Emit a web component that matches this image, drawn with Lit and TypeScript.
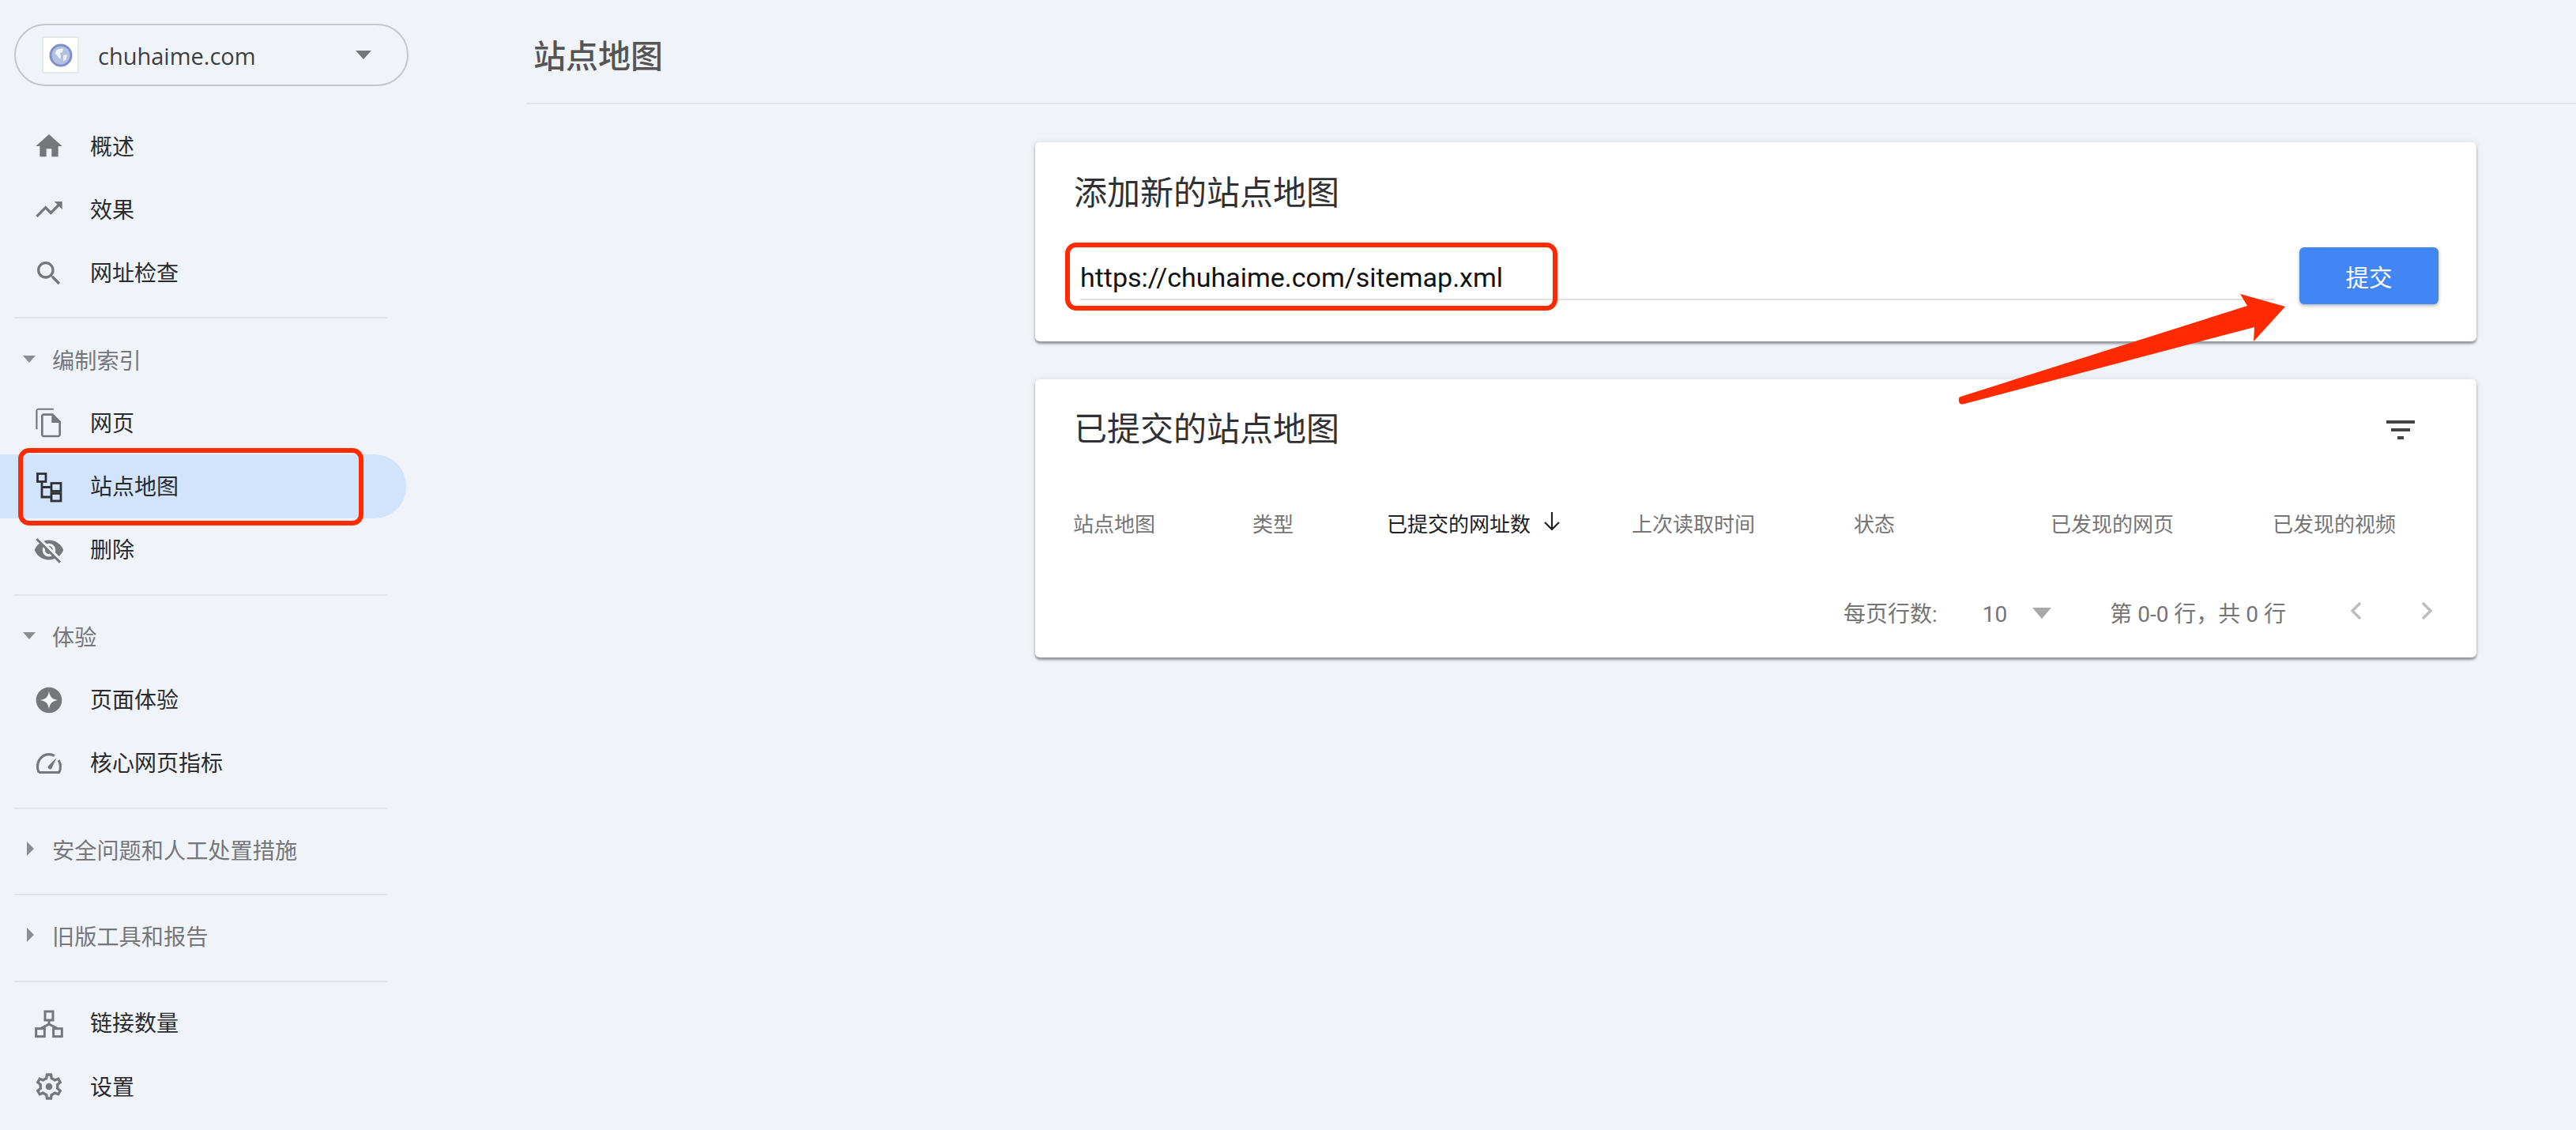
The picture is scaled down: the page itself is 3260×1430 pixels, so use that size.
import { LitElement, html, css, svg } from "lit";
import { customElement } from "lit/decorators.js";

const P = (d: string) => svg`<path d=${d}></path>`;
const icons: Record<string, unknown> = {
  home: P("M10 20v-6h4v6h5v-8h3L12 3 2 12h3v8z"),
  trend: P("M16 6l2.29 2.29-4.88 4.88-4-4L2 16.59 3.41 18l6-6 4 4 6.3-6.29L22 12V6z"),
  search: P("M15.5 14h-.79l-.28-.27C15.41 12.59 16 11.11 16 9.5 16 5.91 13.09 3 9.5 3S3 5.91 3 9.5 5.91 16 9.5 16c1.61 0 3.09-.59 4.23-1.57l.27.28v.79l5 4.99L20.49 19l-4.99-5zm-6 0C7.01 14 5 11.99 5 9.5S7.01 5 9.5 5 14 7.01 14 9.5 11.99 14 9.5 14z"),
  pages: svg`<path d="M15.5 1H4c-1.1 0-2 .9-2 2v14h1.3V2.3h12.2V1z"></path><path d="M15 5H8c-1.1 0-1.99.9-1.99 2L6 21c0 1.1.89 2 1.99 2H19c1.1 0 2-.9 2-2V11l-6-6zM7.6 21.4V6.6h6.4v5.4h5.4v9.4H7.6z"></path><path d="M14.5 6l6 6h-6z"></path>`,
  hide: P("M12 7c2.76 0 5 2.24 5 5 0 .65-.13 1.26-.36 1.83l2.92 2.92c1.51-1.26 2.7-2.89 3.43-4.75-1.73-4.39-6-7.5-11-7.5-1.4 0-2.74.25-3.98.7l2.16 2.16C10.74 7.13 11.35 7 12 7zM2 4.27l2.28 2.28.46.46C3.08 8.3 1.78 10.02 1 12c1.73 4.39 6 7.5 11 7.5 1.55 0 3.03-.3 4.38-.84l.42.42L19.73 22 21 20.73 3.27 3 2 4.27zM7.53 9.8l1.55 1.55c-.05.21-.08.43-.08.65 0 1.66 1.34 3 3 3 .22 0 .44-.03.65-.08l1.55 1.55c-.67.33-1.41.53-2.2.53-2.76 0-5-2.24-5-5 0-.79.2-1.53.53-2.2zm4.31-.78l3.15 3.15.02-.16c0-1.66-1.34-3-3-3l-.17.01z"),
  star: svg`<circle cx="12" cy="12" r="9.8"></circle><path style="fill:#f7f9fc" d="M12 5.2C12.7 9.6 14.4 11.3 18.8 12 14.4 12.7 12.7 14.4 12 18.8 11.3 14.4 9.6 12.7 5.2 12 9.6 11.3 11.3 9.6 12 5.2z"></path>`,
  gauge: svg`<path fill="none" stroke="#75777b" stroke-width="1.9" stroke-linejoin="round" d="M4.3 18.9C3.6 17.6 3.3 16.3 3.3 14.6 3.3 9.2 7.2 5.2 12 5.2c1.6 0 3 .4 4.2 1.1M19.3 9.6c.9 1.5 1.4 3.2 1.4 5 0 1.7-.3 3-1 4.3H4.3"></path><path d="M17.8 7.6l-3.6 8c-.6 1-1.6 1.1-2.4.6-.8-.6-.9-1.7-.2-2.4z"></path>`,
  links: svg`<g fill="none" stroke="#75777b" stroke-width="1.8"><rect x="9" y="3" width="6" height="6.6"></rect><rect x="2.2" y="16" width="6.4" height="6"></rect><rect x="15.4" y="16" width="6.4" height="6"></rect><path d="M12 9.6V12.6L5.6 16M12 12.6L18.4 16"></path></g>`,
  gear: svg`<path d="M19.43 12.98c.04-.32.07-.64.07-.98 0-.34-.03-.66-.07-.98l2.11-1.65c.19-.15.24-.42.12-.64l-2-3.46c-.09-.16-.26-.25-.44-.25-.06 0-.12.01-.17.03l-2.49 1c-.52-.4-1.08-.73-1.69-.98l-.38-2.65C14.46 2.18 14.25 2 14 2h-4c-.25 0-.46.18-.49.42l-.38 2.65c-.61.25-1.17.59-1.69.98l-2.49-1c-.06-.02-.12-.03-.18-.03-.17 0-.34.09-.43.25l-2 3.46c-.13.22-.07.49.12.64l2.11 1.65c-.04.32-.07.65-.07.98 0 .33.03.66.07.98l-2.11 1.65c-.19.15-.24.42-.12.64l2 3.46c.09.16.26.25.44.25.06 0 .12-.01.17-.03l2.49-1c.52.4 1.08.73 1.69.98l.38 2.65c.03.24.24.42.49.42h4c.25 0 .46-.18.49-.42l.38-2.65c.61-.25 1.17-.59 1.69-.98l2.49 1c.06.02.12.03.18.03.17 0 .34-.09.43-.25l2-3.46c.12-.22.07-.49-.12-.64l-2.11-1.65zm-1.98-1.71c.04.31.05.52.05.73 0 .21-.02.43-.05.73l-.14 1.13.89.7 1.08.84-.7 1.21-1.27-.51-1.04-.42-.9.68c-.43.32-.84.56-1.25.73l-1.06.43-.16 1.13-.2 1.35h-1.4l-.19-1.35-.16-1.13-1.06-.43c-.43-.18-.83-.41-1.23-.71l-.91-.7-1.06.43-1.27.51-.7-1.21 1.08-.84.89-.7-.14-1.13c-.03-.31-.05-.54-.05-.74s.02-.43.05-.73l.14-1.13-.89-.7-1.08-.84.7-1.21 1.27.51 1.04.42.9-.68c.43-.32.84-.56 1.25-.73l1.06-.43.16-1.13.2-1.35h1.39l.19 1.35.16 1.13 1.06.43c.43.18.83.41 1.23.71l.91.7 1.06-.43 1.27-.51.7 1.21-1.07.85-.89.7.14 1.13z"></path><circle cx="12" cy="12" r="2.6"></circle>`,
};
const sitemapIcon = svg`<g fill="none" stroke="#2f3033" stroke-width="2.8"><rect x="5.5" y="3.5" width="10.5" height="10"></rect><rect x="23" y="15.5" width="12" height="10"></rect><rect x="23" y="28.5" width="12" height="9.5"></rect><path d="M11 13.5V33H23M11 20.5H23"></path></g>`;

const groups = [
  { items: [["home", "概述"], ["trend", "效果"], ["search", "网址检查"]] },
  { title: "编制索引", open: true, items: [["pages", "网页"], ["sitemap", "站点地图"], ["hide", "删除"]] },
  { title: "体验", open: true, items: [["star", "页面体验"], ["gauge", "核心网页指标"]] },
  { title: "安全问题和人工处置措施", items: [] },
  { title: "旧版工具和报告", items: [] },
  { items: [["links", "链接数量"], ["gear", "设置"]] },
];

const columns = ["站点地图", "类型", "已提交的网址数", "上次读取时间", "状态", "已发现的网页", "已发现的视频"];

@customElement("app-root")
export class AppRoot extends LitElement {
  static styles = css`
    :host {
      display: flex; position: relative; width: 3260px; height: 1430px; overflow: hidden;
      background: #f0f4f9; color: #212121;
      font-family: Roboto, "Noto Sans CJK SC", sans-serif;
    }
    .side { width: 666px; flex: none; padding-top: 30px; box-sizing: border-box; }
    .prop {
      width: 499px; height: 79px; margin-left: 18px; box-sizing: border-box;
      border: 2px solid #c4c6c9; border-radius: 40px; display: flex; align-items: center; padding-left: 33px;
    }
    .fav {
      width: 47px; height: 47px; box-sizing: border-box; background: #fff; border: 2px solid #e6e8ea;
      border-radius: 3px; display: flex; align-items: center; justify-content: center; margin-right: 24px;
    }
    .fav svg { width: 32px; height: 32px; filter: blur(0.6px); }
    .prop-name { font: 29px "Open Sans", sans-serif; color: #3c4043; flex: 1; padding-top: 2px; }
    .caret {
      width: 0; height: 0; border-left: 10px solid transparent; border-right: 10px solid transparent;
      border-top: 11px solid #75777b; margin-right: 45px;
    }
    .nav { margin-top: 36px; }
    .group { padding: 11px 0 16px; }
    .group:first-child { padding: 0 0 15px; }
    .group:nth-child(3), .group:last-child { padding-top: 12px; }
    .divider { height: 2px; width: 472px; margin-left: 18px; background: #e3e4e7; }
    .row {
      height: 80.3px; display: flex; align-items: center; padding-left: 42px; font-size: 28px;
      color: #2a2b2d; box-sizing: border-box; width: 514px;
    }
    .row span { padding-bottom: 3px; }
    .row.active { background: #d2e3fc; border-radius: 0 40px 40px 0; }
    .row svg { width: 40px; height: 40px; fill: #75777b; margin-right: 32px; flex: none; }
    .sec { height: 80.3px; display: flex; align-items: center; font-size: 28.2px; color: #75777b; padding-bottom: 2px; box-sizing: border-box; }
    .tri { width: 66px; flex: none; display: flex; }
    .tri.open i {
      margin-left: 29px; border-left: 8.5px solid transparent; border-right: 8.5px solid transparent; border-top: 9px solid #8b8d90;
    }
    .tri.closed i {
      margin-left: 34px; border-top: 9px solid transparent; border-bottom: 9px solid transparent; border-left: 9px solid #8b8d90;
    }
    .main { flex: 1; }
    .head {
      height: 132px; box-sizing: border-box; border-bottom: 2px solid #e0e2e5; display: flex; align-items: center;
      padding: 5px 0 0 9px; font-size: 41px; font-weight: 500; color: #555; margin-bottom: 48px;
    }
    .card {
      width: 1824px; margin-left: 644px; background: #fff; border-radius: 6px; box-sizing: border-box;
      box-shadow: 0 3px 3px rgba(60, 64, 67, 0.5), 0 0 8px rgba(60, 64, 67, 0.12);
    }
    .c1 { height: 252px; padding: 40px 48px 0 49px; }
    .c2 { height: 352px; margin-top: 48px; padding: 39px 0 0 49px; }
    .title { font-size: 42px; line-height: 50px; color: #303134; }
    .add { display: flex; margin-top: 43px; padding-left: 8px; gap: 32px; }
    .field {
      flex: 1; height: 50px; margin-top: 15px; border-bottom: 2px solid #e0e0e0; font-size: 34px; line-height: 47px; color: #111;
    }
    .btn {
      width: 176px; height: 72px; background: #4285f4; color: #fff; font-size: 29.5px; border-radius: 6px;
      display: flex; align-items: center; justify-content: center;
      box-shadow: 0 2px 4px rgba(60, 64, 67, 0.4);
    }
    .t2 { display: flex; justify-content: space-between; align-items: center; padding-right: 78px; }
    .filter { width: 36px; height: 24px; display: flex; flex-direction: column; align-items: center; justify-content: space-between; }
    .filter i { display: block; height: 4px; background: #444; }
    .filter i:nth-child(1) { width: 36px; }
    .filter i:nth-child(2) { width: 24px; }
    .filter i:nth-child(3) { width: 8px; }
    .cols {
      display: grid; grid-template-columns: 227px 170px 310px 281px 249px 281px 1fr;
      margin: 75px 0 0 -1px; font-size: 26px; line-height: 40px; color: #757575;
    }
    .sorted { color: #202124; display: flex; align-items: center; }
    .sorted svg { width: 24px; height: 26px; margin-left: 15px; fill: none; stroke: #202124; stroke-width: 2.2; margin-top: -10px; }
    .pager {
      display: flex; justify-content: flex-end; align-items: center; margin-top: 74px; padding-right: 54px;
      font-size: 28px; line-height: 40px; color: #757575;
    }
    .num { margin-left: 57px; }
    .drop { width: 0; height: 0; margin: -4px 0 0 32px; border-left: 12px solid transparent; border-right: 12px solid transparent; border-top: 14px solid #a8a8a8; }
    .range { margin-left: 74px; }
    .chev { width: 17px; height: 24px; fill: none; stroke: #bdbdbd; stroke-width: 3.4; margin-top: -10px; }
    .chev.first { margin-left: 80px; }
    .chev.next { margin-left: 73px; }
    .mark { position: absolute; border: 6px solid #ff2a00; border-radius: 14px; box-sizing: border-box; pointer-events: none; }
    .m1 { left: 23px; top: 567px; width: 437px; height: 98px; }
    .m2 { left: 1348px; top: 307px; width: 623px; height: 86px; }
    .arrow { position: absolute; left: 0; top: 0; width: 3260px; height: 1430px; pointer-events: none; }
  `;

  renderRow(icon: string, label: string) {
    const active = icon === "sitemap";
    return html`<div class="row ${active ? "active" : ""}">
      <svg viewBox=${active ? "0 0 40 40" : "0 0 24 24"}>${active ? sitemapIcon : icons[icon]}</svg>
      <span>${label}</span>
    </div>`;
  }

  render() {
    return html`
      <aside class="side">
        <div class="prop">
          <div class="fav">
            <svg viewBox="0 0 32 32">
              <circle cx="16" cy="16" r="13" fill="#b4c0e2" stroke="#7f8fcb" stroke-width="3"></circle>
              <path d="M10 10c3-2 6-3 9-2l-1 4-3 1 1 5-1 3-3-4-3-3z" fill="#f4f6fc"></path>
              <path d="M19 16l5-1-1 6-4 3z" fill="#e6ebf7"></path>
            </svg>
          </div>
          <span class="prop-name">chuhaime.com</span>
          <i class="caret"></i>
        </div>
        <nav class="nav">
          ${groups.map(
            (g, i) => html`
              ${i > 0 ? html`<div class="divider"></div>` : ""}
              <div class="group">
                ${g.title
                  ? html`<div class="sec"><span class="tri ${g.open ? "open" : "closed"}"><i></i></span>${g.title}</div>`
                  : ""}
                ${g.items.map(([ic, label]) => this.renderRow(ic, label))}
              </div>
            `
          )}
        </nav>
      </aside>
      <main class="main">
        <header class="head">站点地图</header>
        <section class="card c1">
          <div class="title">添加新的站点地图</div>
          <div class="add">
            <div class="field">https://chuhaime.com/sitemap.xml</div>
            <div class="btn">提交</div>
          </div>
        </section>
        <section class="card c2">
          <div class="t2">
            <div class="title">已提交的站点地图</div>
            <div class="filter"><i></i><i></i><i></i></div>
          </div>
          <div class="cols">
            ${columns.map((c, i) =>
              i === 2
                ? html`<div class="sorted">${c}<svg viewBox="0 0 24 26"><path d="M12 2V24M3 15L12 24 21 15"></path></svg></div>`
                : html`<div>${c}</div>`
            )}
          </div>
          <div class="pager">
            <span>每页行数:</span>
            <span class="num">10</span>
            <i class="drop"></i>
            <span class="range">第 0-0 行，共 0 行</span>
            <svg class="chev first" viewBox="0 0 17 24"><path d="M14 2L4 12 14 22"></path></svg>
            <svg class="chev next" viewBox="0 0 17 24"><path d="M3 2L13 12 3 22"></path></svg>
          </div>
        </section>
      </main>
      <div class="mark m1"></div>
      <div class="mark m2"></div>
      <svg class="arrow" viewBox="0 0 3260 1430">
        <path fill="#ff2a00" d="M2481 502L2844 387 2835 372 2892 388 2852 432 2853 414 2486 511Q2480 513 2479 508Q2478 503 2481 502Z"></path>
      </svg>
    `;
  }
}
